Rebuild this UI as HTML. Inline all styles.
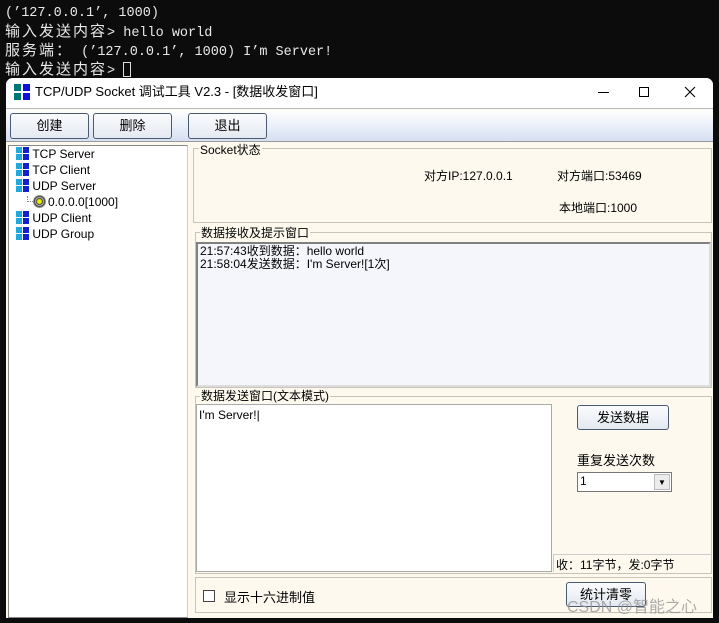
<!DOCTYPE html>
<html><head><meta charset="utf-8"><style>
*{margin:0;padding:0;box-sizing:border-box}
body{width:719px;height:623px;background:#0c0c0c;position:relative;overflow:hidden;font-family:"Liberation Sans","Noto Sans CJK SC",sans-serif;font-size:12px;color:#000}
.a{position:absolute;white-space:nowrap}
.con{font-family:"Liberation Mono","Noto Sans CJK SC",monospace;font-size:13.5px;color:#e8e8e8;left:5px;line-height:19px}
.con b{font-weight:normal;font-size:15px;letter-spacing:2px}
.btn{position:absolute;border:1px solid #4a5a70;border-radius:3px;background:linear-gradient(#fafbfd,#e4e9f1);text-align:center;font-size:13px}
.gb{position:absolute;border:1px solid #c8c4b8;}
.gl{position:absolute;background:#fdf9ef;font-size:12px;padding:0 1px;line-height:13px}
.ti{position:absolute;left:4px;height:16px;line-height:16px;font-size:12px}
.ic{display:inline-block;width:13px;height:13px;vertical-align:-2px;margin-right:3px;background:linear-gradient(90deg,transparent 6px,#fff 6px,#fff 7px,transparent 7px),linear-gradient(transparent 6px,#fff 6px,#fff 7px,transparent 7px),linear-gradient(90deg,#2ad 0 6px,#12c 6px)}
</style></head><body>
<div class="a con" style="top:4px">(’127.0.0.1’, 1000)</div>
<div class="a con" style="top:23px"><b>输入发送内容</b>&gt; hello world</div>
<div class="a con" style="top:42px"><b>服务端：</b> (’127.0.0.1’, 1000) I’m Server!</div>
<div class="a con" style="top:61px"><b>输入发送内容</b>&gt; <span style="display:inline-block;width:8px;height:15px;border:1px solid #ddd;vertical-align:-3px"></span></div>

<div class="a" style="left:6px;top:78px;width:707px;height:540px;background:#fdf9ef;border-radius:7px 7px 0 0;overflow:hidden">
 <div class="a" style="left:0;top:0;width:707px;height:31px;background:#fff;border-bottom:1px solid #bbb"></div>
 <div class="a" style="left:8px;top:6px;width:16px;height:16px;background:linear-gradient(90deg,transparent 7px,#fff 7px,#fff 9px,transparent 9px),linear-gradient(transparent 7px,#fff 7px,#fff 9px,transparent 9px),linear-gradient(90deg,#077 0 8px,#11d 8px)"></div>
 <div class="a" style="left:29px;top:6px;font-size:13px;line-height:16px">TCP/UDP Socket 调试工具 V2.3 - [数据收发窗口]</div>
 <div class="a" style="left:592px;top:14px;width:11px;height:1px;background:#000"></div>
 <div class="a" style="left:633px;top:9px;width:10px;height:10px;border:1px solid #000"></div>
 <svg class="a" style="left:678px;top:8px" width="12" height="12"><path d="M1 1L11 11M11 1L1 11" stroke="#000" stroke-width="1.1"/></svg>
 <div class="a" style="left:0;top:32px;width:707px;height:32px;background:linear-gradient(#fff,#d6e0f2);border-bottom:1px solid #999"></div>
 <div class="btn" style="left:4px;top:35px;width:79px;height:26px;line-height:24px">创建</div>
 <div class="btn" style="left:87px;top:35px;width:79px;height:26px;line-height:24px">删除</div>
 <div class="btn" style="left:182px;top:35px;width:79px;height:26px;line-height:24px">退出</div>
 <div class="a" style="left:2px;top:67px;width:180px;height:473px;background:#fff;border:1px solid #888;border-right-color:#ccc">
  <div class="ti" style="top:0">&nbsp;<span class="ic"></span>TCP Server</div>
  <div class="ti" style="top:16px">&nbsp;<span class="ic"></span>TCP Client</div>
  <div class="ti" style="top:32px">&nbsp;<span class="ic"></span>UDP Server</div>
  <div class="ti" style="top:48px;left:18px"><span style="display:inline-block;width:6px;height:6px;border-left:1px dotted #888;border-bottom:1px dotted #888;vertical-align:4px"></span><span style="display:inline-block;width:13px;height:13px;border-radius:50%;background:radial-gradient(#ee0 0 2px,#333 3px,#ccc 4px,#333 5px,#999 6px);vertical-align:-2px;margin-right:2px"></span>0.0.0.0[1000]</div>
  <div class="ti" style="top:64px">&nbsp;<span class="ic"></span>UDP Client</div>
  <div class="ti" style="top:80px">&nbsp;<span class="ic"></span>UDP Group</div>
 </div>
 <div class="gb" style="left:187px;top:70px;width:519px;height:75px"></div>
 <div class="gl" style="left:193px;top:66px">Socket状态</div>
 <div class="a" style="left:418px;top:89px">对方IP:127.0.0.1</div>
 <div class="a" style="left:551px;top:89px">对方端口:53469</div>
 <div class="a" style="left:553px;top:121px">本地端口:1000</div>
 <div class="gb" style="left:189px;top:154px;width:517px;height:156px"></div>
 <div class="gl" style="left:194px;top:149px">数据接收及提示窗口</div>
 <div class="a" style="left:190px;top:164px;width:515px;height:145px;background:#f4f6fb;border:2px solid #808080;border-right-color:#ddd;border-bottom-color:#ddd;padding:1px 2px;line-height:13px">21:57:43收到数据：hello world<br>21:58:04发送数据：I'm Server![1次]</div>
 <div class="gb" style="left:189px;top:318px;width:517px;height:178px"></div>
 <div class="gl" style="left:194px;top:312px">数据发送窗口(文本模式)</div>
 <div class="a" style="left:190px;top:326px;width:356px;height:168px;background:#fff;border:1px solid #aaa;padding:3px 2px">I'm Server!|</div>
 <div class="btn" style="left:571px;top:327px;width:92px;height:25px;line-height:23px">发送数据</div>
 <div class="a" style="left:571px;top:372px;font-size:13px">重复发送次数</div>
 <div class="a" style="left:571px;top:394px;width:95px;height:20px;background:#fff;border:1px solid #777;padding:1px 2px">1<div class="a" style="right:1px;top:1px;width:16px;height:16px;background:#ececec;border:1px solid #bbb;font-size:8px;text-align:center;line-height:15px">▼</div></div>
 <div class="a" style="left:547px;top:476px;width:159px;height:18px;border-top:1px solid #ccc;border-left:1px solid #ccc;padding:1px 2px">收：11字节，发:0字节</div>
 <div class="gb" style="left:189px;top:499px;width:517px;height:36px"></div>
 <div class="a" style="left:197px;top:512px;width:12px;height:12px;border:1px solid #444;background:#fff"></div>
 <div class="a" style="left:218px;top:509px;font-size:13px">显示十六进制值</div>
 <div class="btn" style="left:560px;top:504px;width:80px;height:25px;line-height:23px">统计清零</div>
 <div class="a" style="left:561px;top:515px;font-size:16px;color:rgba(150,150,150,.8)">CSDN @智能之心</div>
</div>
</body></html>
